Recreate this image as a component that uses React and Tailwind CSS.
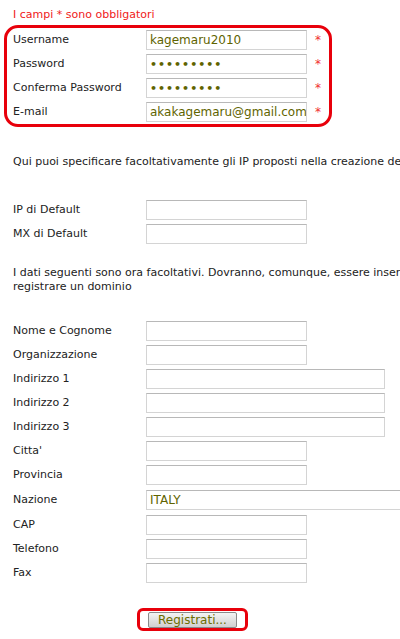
import React from 'react';

const Field = ({ value = '', w = 'w-[161px]', dots }) => (
  <div
    className={`${w} h-[20px] shrink-0 border border-[#d4d4d4] border-t-[#b8b8b8] bg-white px-[3px] flex items-center text-[#5f6400] text-[12px] leading-none whitespace-nowrap overflow-hidden`}
  >
    {dots ? <span className="tracking-[1px] text-[11px] font-bold">•••••••••</span> : value}
  </div>
);

const Row = ({ label, children, star }) => (
  <div className="h-[24px] flex items-center">
    <div className="w-[133px] shrink-0">{label}</div>
    {children}
    {star && <span className="ml-[8px] text-[#f03030] text-[12px]">*</span>}
  </div>
);

export default function App() {
  return (
    <div
      className="w-[400px] h-[639px] overflow-hidden bg-white text-[#222] text-[11px]"
      style={{ fontFamily: 'Tahoma, "DejaVu Sans", Verdana, sans-serif' }}
    >
      <div className="w-[560px]">
        <div className="pl-[13px] pt-[8px] h-[25px] text-[#f02020] leading-[14px]">I campi * sono obbligatori</div>

        <div className="ml-[4px] w-[328px] border-[3px] border-[#e8000b] rounded-[14px] pl-[6px]">
          <Row label="Username" star>
            <Field value="kagemaru2010" />
          </Row>
          <Row label="Password" star>
            <Field dots />
          </Row>
          <Row label="Conferma Password" star>
            <Field dots />
          </Row>
          <Row label="E-mail" star>
            <Field value="akakagemaru@gmail.com" />
          </Row>
        </div>

        <p className="pl-[13px] mt-[28px] leading-[14px] whitespace-nowrap">
          Qui puoi specificare facoltativamente gli IP proposti nella creazione dei domini
        </p>

        <div className="pl-[13px] mt-[29px]">
          <Row label="IP di Default">
            <Field />
          </Row>
          <Row label="MX di Default">
            <Field />
          </Row>
        </div>

        <p className="pl-[13px] mt-[20px] leading-[14px] whitespace-nowrap">
          I dati seguenti sono ora facoltativi. Dovranno, comunque, essere inseriti per
          <br />
          registrare un dominio
        </p>

        <div className="pl-[13px] mt-[25px]">
          <Row label="Nome e Cognome">
            <Field />
          </Row>
          <Row label="Organizzazione">
            <Field />
          </Row>
          <Row label="Indirizzo 1">
            <Field w="w-[239px]" />
          </Row>
          <Row label="Indirizzo 2">
            <Field w="w-[239px]" />
          </Row>
          <Row label="Indirizzo 3">
            <Field w="w-[239px]" />
          </Row>
          <Row label="Citta'">
            <Field />
          </Row>
          <Row label="Provincia">
            <Field />
          </Row>
          <div className="h-[1px]" />
          <Row label="Nazione">
            <Field w="w-[320px]" value="ITALY" />
          </Row>
          <div className="h-[1px]" />
          <Row label="CAP">
            <Field />
          </Row>
          <Row label="Telefono">
            <Field />
          </Row>
          <Row label="Fax">
            <Field />
          </Row>
        </div>

        <div className="mt-[23px] ml-[137px] w-[111px] h-[23px] border-[3px] border-[#e8000b] rounded-[6px] flex items-center justify-center">
          <button className="w-[89px] h-[16px] border border-[#8a8a8a] rounded-[2px] bg-gradient-to-b from-[#f4f4f4] to-[#d0d0d0] text-[#6b6e00] text-[12px] leading-none">
            Registrati...
          </button>
        </div>
      </div>
    </div>
  );
}
